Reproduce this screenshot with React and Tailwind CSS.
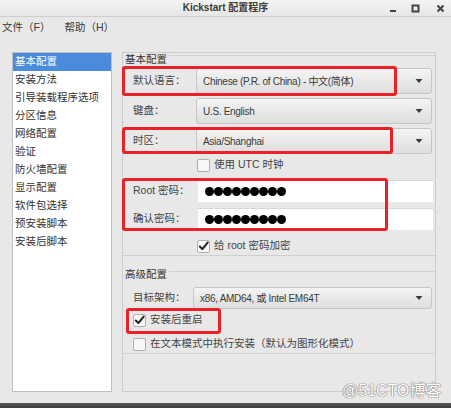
import React from "react";

const FONT = { fontFamily: '"Liberation Sans", "Noto Sans CJK SC", sans-serif' };

function Arrow() {
  return (
    <svg width="8" height="5" viewBox="0 0 8 5" className="absolute right-[8px] top-1/2 -translate-y-1/2">
      <path d="M0.5 0.5 L7.5 0.5 L4 4.5 Z" fill="#3a3a3a" />
    </svg>
  );
}

function Combo({ text, left = "ml-[73px]", h = "h-[26px]" }) {
  return (
    <div className={`relative ${left} mr-[3px] flex-1 ${h} rounded-[3px] border border-[#c6c6c6] bg-gradient-to-b from-[#f4f4f4] to-[#dedede] flex items-center pl-[6px] text-[10px] tracking-[-0.3px] text-[#3a3a3a]`}>
      {text}
      <Arrow />
    </div>
  );
}

function Check({ checked }) {
  return (
    <div className="w-[13px] h-[13px] border border-[#b0b0b0] rounded-[2px] bg-[#f7f7f7] flex items-center justify-center shrink-0">
      {checked && (
        <svg width="12" height="12" viewBox="0 0 12 12">
          <path d="M2 6.5 L4.8 9.3 L10.5 2.2" stroke="#222" strokeWidth="2.2" fill="none" strokeLinecap="round" strokeLinejoin="round" />
        </svg>
      )}
    </div>
  );
}

function Dots() {
  return (
    <div className="flex">
      {Array.from({ length: 9 }).map((_, i) => (
        <div key={i} className="w-[9px] h-[9px] rounded-full bg-black" />
      ))}
    </div>
  );
}

const items = ["基本配置", "安装方法", "引导装载程序选项", "分区信息", "网络配置", "验证", "防火墙配置", "显示配置", "软件包选择", "预安装脚本", "安装后脚本"];

export default function App() {
  return (
    <div className="relative w-[451px] h-[408px] overflow-hidden bg-[#e8e8e8] flex flex-col text-[#333]" style={FONT}>
      {/* title bar */}
      <div className="relative h-[17px] shrink-0 bg-gradient-to-b from-[#f4f4f4] to-[#e6e6e6] border-b border-[#cfcfcf] flex items-center justify-center">
        <span className="text-[10px] font-bold text-[#3a3a3a] leading-none">Kickstart 配置程序</span>
        <div className="absolute right-0 top-0 h-[16px] flex items-center">
          <svg width="9" height="9" viewBox="0 0 9 9" className="mr-[13px]"><rect x="1" y="6" width="6" height="2" fill="#444" /></svg>
          <svg width="9" height="9" viewBox="0 0 9 9" className="mr-[16px]"><rect x="1.5" y="1.5" width="6" height="6" fill="none" stroke="#444" strokeWidth="2" /></svg>
          <svg width="9" height="9" viewBox="0 0 9 9" className="mr-[6px]"><path d="M1.5 1.5 L7.5 7.5 M7.5 1.5 L1.5 7.5" stroke="#444" strokeWidth="2" /></svg>
        </div>
      </div>
      {/* menu bar */}
      <div className="h-[20px] shrink-0 flex items-center text-[10.5px] text-[#3a3a3a] pl-[2px] pt-[2px]">
        <span className="mr-[14px]">文件（F）</span>
        <span>帮助（H）</span>
      </div>
      {/* main */}
      <div className="flex px-[12px] pt-[15px] shrink-0">
        <div className="w-[100px] h-[340px] bg-white border border-[#c0c0c0] flex flex-col">
          {items.map((t, i) => (
            <div key={t} className={`h-[18px] flex items-center pl-[2px] text-[10.5px] ${i === 0 ? "bg-[#4a8bdc] text-white" : "text-[#333]"}`}>
              {t}
            </div>
          ))}
        </div>
        <div className="ml-[10px] w-[314px] h-[340px] border border-[#cdcdcd] flex flex-col text-[10.5px]">
          {/* basic group */}
          <div className="flex flex-col border-b border-[#cfcfcf] pb-[1px]">
            <div className="h-[14px] flex items-start">
              <span className="ml-[2px] leading-[14px] text-[#333] mt-[-1px]">基本配置</span>
              <div className="flex-1 mt-[2px] ml-[2px] border-t border-[#d2d2d2]" />
            </div>
            <div className="mt-[1px] flex items-center h-[26px] relative">
              <span className="absolute left-[10px] text-[#444]">默认语言：</span>
              <Combo text="Chinese (P.R. of China) - 中文(简体)" />
            </div>
            <div className="mt-[4px] flex items-center h-[26px] relative">
              <span className="absolute left-[10px] text-[#444]">键盘：</span>
              <Combo text="U.S. English" />
            </div>
            <div className="mt-[4px] flex items-center h-[26px] relative">
              <span className="absolute left-[10px] text-[#444]">时区：</span>
              <Combo text="Asia/Shanghai" />
            </div>
            <div className="mt-[3px] h-[16px] flex items-center pl-[74px] gap-[4px] text-[#444]">
              <Check />
              <span>使用 UTC 时钟</span>
            </div>
            <div className="mt-[7px] h-[22px] flex items-center relative">
              <span className="absolute left-[10px] text-[#444]">Root 密码：</span>
              <div className="ml-[75px] mr-[2px] flex-1 h-[22px] bg-white border-t border-[#d8d8d8] flex items-center pl-[7px]">
                <Dots />
              </div>
            </div>
            <div className="mt-[6px] h-[22px] flex items-center relative">
              <span className="absolute left-[10px] text-[#444]">确认密码：</span>
              <div className="ml-[75px] mr-[2px] flex-1 h-[22px] bg-white border-t border-[#d8d8d8] flex items-center pl-[7px]">
                <Dots />
              </div>
            </div>
            <div className="mt-[8px] h-[16px] flex items-center pl-[74px] gap-[4px] text-[#444]">
              <Check checked />
              <span>给 root 密码加密</span>
            </div>
          </div>
          {/* advanced group */}
          <div className="flex flex-col border-b border-[#d2d2d2] pb-[1px]">
            <div className="mt-[11px] h-[14px] flex items-start">
              <span className="ml-[2px] leading-[14px] text-[#333]">高级配置</span>
              <div className="flex-1 mt-[4px] ml-[2px] border-t border-[#d2d2d2]" />
            </div>
            <div className="mt-[6px] flex items-center h-[22px] relative">
              <span className="absolute left-[10px] text-[#444]">目标架构：</span>
              <Combo text="x86, AMD64, 或 Intel EM64T" left="ml-[70px]" h="h-[22px]" />
            </div>
            <div className="mt-[3px] h-[16px] flex items-center pl-[10px] gap-[4px] text-[#444]">
              <Check checked />
              <span>安装后重启</span>
            </div>
            <div className="mt-[8px] h-[16px] flex items-center pl-[10px] gap-[4px] text-[#444]">
              <Check />
              <span>在文本模式中执行安装（默认为图形化模式）</span>
            </div>
          </div>
        </div>
      </div>
      <div className="flex-1" />
      <div className="h-[5px] shrink-0 bg-gradient-to-b from-[#5a5a5a] to-[#3a3a3a]" />

      {/* red annotation boxes */}
      <div className="absolute left-[122px] top-[66px] w-[275px] h-[30px] border-[3px] border-[#ea2127] rounded-[3px]" />
      <div className="absolute left-[122px] top-[127px] w-[271px] h-[27px] border-[3px] border-[#ea2127] rounded-[3px]" />
      <div className="absolute left-[122px] top-[178px] w-[266px] h-[53px] border-[3px] border-[#ea2127] rounded-[3px]" />
      <div className="absolute left-[126px] top-[308px] w-[95px] h-[26px] border-[3px] border-[#ea2127] rounded-[3px]" />

      {/* watermark */}
      <div
        className="absolute left-[342px] top-[382px] text-[16px] leading-[18px] text-white"
        style={{ textShadow: "0 0 1px #777, 0 0 1px #777, 0 0 1px #777" }}
      >
        @51CTO博客
      </div>
    </div>
  );
}
